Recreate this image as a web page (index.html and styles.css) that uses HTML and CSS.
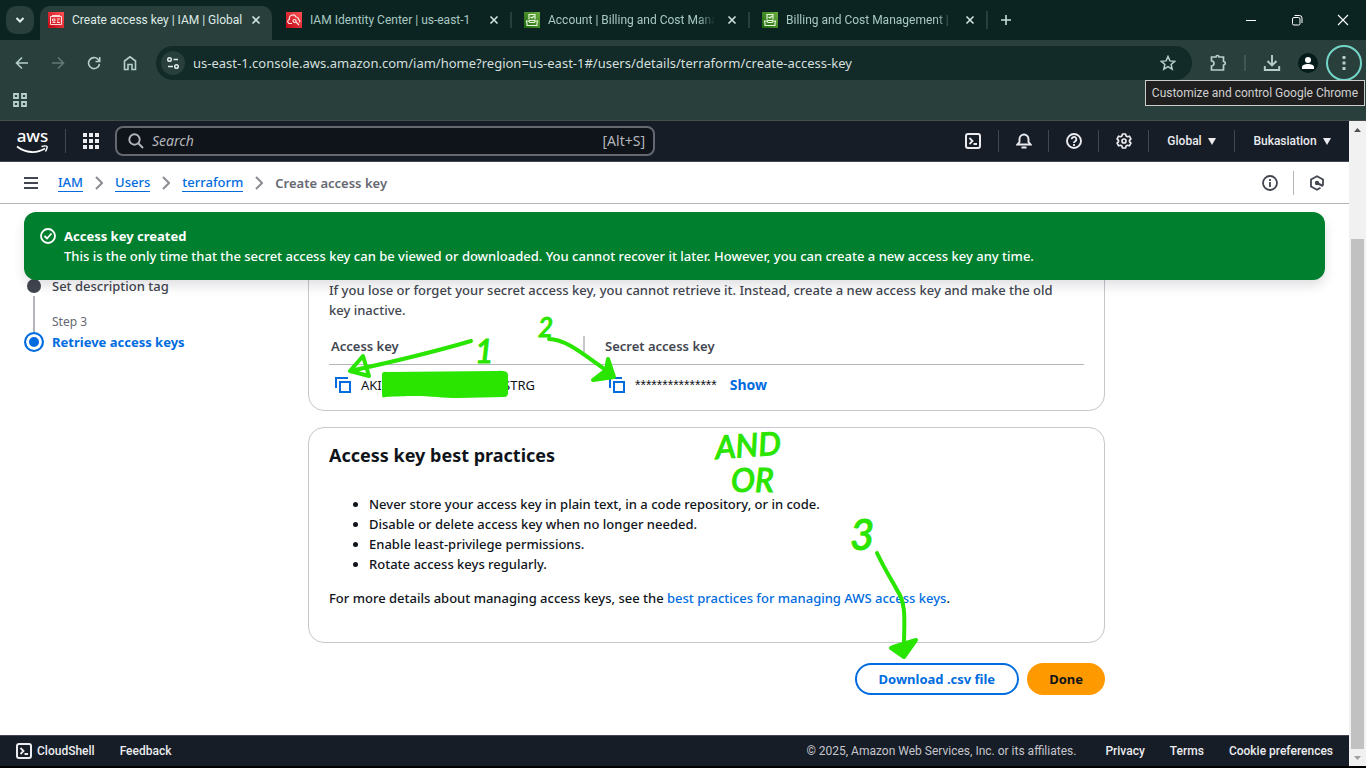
FILE: index.html
```html
<!DOCTYPE html>
<html lang="en">
<head>
<meta charset="utf-8">
<title>Create access key | IAM | Global</title>
<link rel="stylesheet" href="styles.css">
</head>
<body>
<svg class="defs" width="0" height="0" aria-hidden="true">
  <defs>
    <linearGradient id="red" x1="0" y1="1" x2="1" y2="0"><stop offset="0" stop-color="#bd0816"/><stop offset="1" stop-color="#ff5252"/></linearGradient>
    <linearGradient id="green" x1="0" y1="1" x2="1" y2="0"><stop offset="0" stop-color="#1b660f"/><stop offset="1" stop-color="#6cae3e"/></linearGradient>
    <symbol id="close" viewBox="0 0 10 10"><path d="M1.5 1.5l7 7M8.500 1.500l-7 7" fill="none" stroke="currentColor" stroke-width="1.600"/></symbol>
    <symbol id="billing" viewBox="0 0 16 16"><path fill="url(#green)" d="M0 0h16v16H0z"/><path d="M5 7.500V2.500h6v5M6.500 5l1.500 1 2-2M2.500 10.500V9h2l1.500 1.500h4L11.500 9h2v1.500M3 10.500v3h10v-3M5 8.500h6" fill="none" stroke="#e4f5da" stroke-width="1.200"/></symbol>
    <symbol id="copy" viewBox="0 0 18 18"><path d="M2 12V2h12M6 6h10v10H6z" fill="none" stroke="currentColor" stroke-width="2"/></symbol>
    <symbol id="shell" viewBox="0 0 16 16"><rect x="1" y="1" width="14" height="14" rx="2" fill="none" stroke="currentColor" stroke-width="2"/><path d="M4.500 5l3 3-3 3M8.500 11H12" fill="none" stroke="currentColor" stroke-width="1.800"/></symbol>
    <symbol id="chevron" viewBox="0 0 8 14"><path d="M1 1l6 6-6 6" fill="none" stroke="currentColor" stroke-width="2"/></symbol>
  </defs>
</svg>

<header class="browser">
  <div class="tabstrip">
    <button class="tab-search" aria-label="Search tabs"><svg width="10" height="8" viewBox="0 0 10 8"><path d="M1.500 2l3.500 3.500L8.500 2" fill="none" stroke="currentColor" stroke-width="2"/></svg></button>
    <div class="tab active">
      <svg class="favicon" viewBox="0 0 16 16"><path fill="url(#red)" d="M0 0h16v16H0z"/><path d="M2.500 4.500h11v8h-11zM4 3.500h8M4.500 7h2.500v2H4.500zM4.500 10.500h3M9 7h3M9 9h1.500M9 10.500h3" fill="none" stroke="#ffd9d9"/></svg>
      <span class="title">Create access key | IAM | Global</span>
      <button aria-label="Close tab"><svg width="10" height="10"><use href="#close"/></svg></button>
    </div>
    <div class="tab">
      <svg class="favicon" viewBox="0 0 16 16"><path fill="url(#red)" d="M0 0h16v16H0z"/><path d="M6 11.500H4a2 2 0 0 1-.5-4 3.500 3.500 0 0 1 6.500-2.500 2.500 2.500 0 0 1 2.500 2.500 2 2 0 0 1 1 3M8.500 7.500a1.500 1.500 0 1 0 .1 0M10 10l3 3" fill="none" stroke="#ffe0e0" stroke-width="1.200"/></svg>
      <span class="title">IAM Identity Center | us-east-1</span>
      <button aria-label="Close tab"><svg width="10" height="10"><use href="#close"/></svg></button>
    </div>
    <div class="tab ruled">
      <svg class="favicon"><use href="#billing"/></svg>
      <span class="title fade">Account | Billing and Cost Management</span>
      <button aria-label="Close tab"><svg width="10" height="10"><use href="#close"/></svg></button>
    </div>
    <div class="tab ruled">
      <svg class="favicon"><use href="#billing"/></svg>
      <span class="title fade">Billing and Cost Management | Global</span>
      <button aria-label="Close tab"><svg width="10" height="10"><use href="#close"/></svg></button>
    </div>
    <button class="new-tab" aria-label="New tab"><svg width="12" height="12" viewBox="0 0 12 12"><path d="M6 1v10M1 6h10" stroke="currentColor" stroke-width="1.600"/></svg></button>
    <div class="window-controls">
      <button aria-label="Minimize"><svg width="12" height="12" viewBox="0 0 12 12"><path d="M1 6.500h10" stroke="currentColor"/></svg></button>
      <button aria-label="Restore"><svg width="12" height="12" viewBox="0 0 12 12"><rect x="1.500" y="3.500" width="7.500" height="7.500" rx="1.500" fill="none" stroke="currentColor"/><path d="M3.500 1.500h5a2.500 2.500 0 0 1 2.500 2.500v5" fill="none" stroke="currentColor"/></svg></button>
      <button aria-label="Close"><svg width="12" height="12" viewBox="0 0 12 12"><path d="M1 1l10 10M11 1L1 11" stroke="currentColor" stroke-width="1.100"/></svg></button>
    </div>
  </div>
  <div class="toolbar">
    <div class="nav-buttons">
      <button aria-label="Back"><svg width="14" height="14" viewBox="0 0 14 14"><path d="M13 7H2M7 1.500L1.500 7 7 12.500" fill="none" stroke="currentColor" stroke-width="1.600"/></svg></button>
      <button class="dim" aria-label="Forward"><svg width="14" height="14" viewBox="0 0 14 14"><path d="M1 7h11M7 1.500L12.500 7 7 12.500" fill="none" stroke="currentColor" stroke-width="1.600"/></svg></button>
      <button aria-label="Reload"><svg width="14" height="14" viewBox="0 0 14 14"><path d="M12.500 8A5.500 5.500 0 1 1 11 3.200L12.500 5M12.700 1v4.500H8.500" fill="none" stroke="currentColor" stroke-width="1.600"/></svg></button>
      <button aria-label="Home"><svg width="14" height="16" viewBox="0 0 14 16"><path d="M1.500 14.500V6L7 1.800 12.500 6v8.500H9V9.500H5v5z" fill="none" stroke="currentColor" stroke-width="1.600"/></svg></button>
    </div>
    <div class="omnibox">
      <button class="site-info" aria-label="View site information"><svg width="14" height="14" viewBox="0 0 14 14"><path d="M7.500 3.500H12M2 10.500h5" stroke="currentColor" stroke-width="1.600"/><circle cx="3.500" cy="3.500" r="1.800" fill="none" stroke="currentColor" stroke-width="1.500"/><circle cx="10.500" cy="10.500" r="1.800" fill="none" stroke="currentColor" stroke-width="1.500"/></svg></button>
      <input type="text" aria-label="Address" value="us-east-1.console.aws.amazon.com/iam/home?region=us-east-1#/users/details/terraform/create-access-key">
      <button aria-label="Bookmark this tab"><svg width="16" height="16" viewBox="0 0 16 16"><path d="M8 1.500l1.900 4.400 4.800.4-3.600 3.200 1.100 4.700L8 11.700l-4.200 2.500 1.100-4.700L1.300 6.300l4.800-.4z" fill="none" stroke="currentColor" stroke-width="1.500"/></svg></button>
    </div>
    <div class="extensions">
      <button aria-label="Extensions"><svg width="18" height="18" viewBox="0 0 18 18"><path d="M2.500 3H7a1.500 1.500 0 0 1 3 0h4.500v4.500a1.600 1.600 0 0 1 0 3.500v5h-12v-4a2.500 2.500 0 0 0 0-5z" fill="none" stroke="currentColor" stroke-width="1.700"/></svg></button>
      <span class="bar"></span>
      <button aria-label="Downloads"><svg width="18" height="18" viewBox="0 0 18 18"><path d="M9 1v10M4.500 7L9 11.500 13.500 7M1.800 12v4h14.400v-4" fill="none" stroke="currentColor" stroke-width="1.900"/></svg></button>
      <button class="avatar" aria-label="Profile"><svg width="20" height="20" viewBox="0 0 20 20"><circle cx="10" cy="10" r="10" fill="#061c1b"/><circle cx="10" cy="7" r="3" fill="#fff"/><path d="M4 16v-2c0-4 12-4 12 0v2z" fill="#fff"/></svg></button>
      <button class="menu" aria-label="Customize and control Google Chrome"><svg width="4" height="16" viewBox="0 0 4 16"><path d="M.5 1h3v3h-3zM.5 6.500h3v3h-3zM.5 12h3v3h-3z" fill="currentColor"/></svg></button>
      <span class="tooltip" role="tooltip">Customize and control Google Chrome</span>
    </div>
  </div>
  <div class="bookmarks">
    <button aria-label="Apps"><svg width="14" height="14" viewBox="0 0 14 14"><path d="M1 1h4v4H1zM9 1h4v4H9zM1 9h4v4H1zM9 9h4v4H9z" fill="none" stroke="currentColor" stroke-width="1.800"/></svg></button>
  </div>
</header>

<div class="viewport">
  <div class="console">
    <nav class="aws-nav" aria-label="Global">
      <a class="logo" href="#" aria-label="AWS home"><span>aws</span><svg width="33" height="9" viewBox="0 0 33 9"><path d="M1 1.500c9 7 20 7 28 2" fill="none" stroke="#fff" stroke-width="1.800"/><path d="M25.500 1.500c6-1.500 7-.5 4 5" fill="none" stroke="#fff" stroke-width="1.500"/></svg></a>
      <button class="services" aria-label="Services"><svg width="16" height="16" viewBox="0 0 16 16"><path d="M0 0h4v4H0zM6 0h4v4H6zM12 0h4v4h-4zM0 6h4v4H0zM6 6h4v4H6zM12 6h4v4h-4zM0 12h4v4H0zM6 12h4v4H6zM12 12h4v4h-4z" fill="currentColor"/></svg></button>
      <label class="search">
        <svg width="16" height="16" viewBox="0 0 16 16"><circle cx="6.500" cy="6.500" r="5.200" fill="none" stroke="currentColor" stroke-width="1.900"/><path d="M10.500 10.500L15 15" stroke="currentColor" stroke-width="2"/></svg>
        <input type="search" placeholder="Search" aria-label="Search">
        <span>[Alt+S]</span>
      </label>
      <div class="nav-tools">
        <button aria-label="CloudShell"><svg width="16" height="16"><use href="#shell"/></svg></button>
        <button aria-label="Notifications"><svg width="16" height="16" viewBox="0 0 16 16"><path d="M1.500 11.500h13L12.500 9V6a4.500 4.500 0 0 0-9 0v3zM5.500 14.500h5" fill="none" stroke="currentColor" stroke-width="1.900"/></svg></button>
        <button aria-label="Support"><svg width="16" height="16" viewBox="0 0 16 16"><circle cx="8" cy="8" r="7" fill="none" stroke="currentColor" stroke-width="1.900"/><path d="M5.700 6.300a2.300 2.300 0 1 1 3.400 2Q8 8.700 8 10M8 11v2" fill="none" stroke="currentColor" stroke-width="1.800"/></svg></button>
        <button aria-label="Settings"><svg width="16" height="16" viewBox="0 0 16 16"><path d="M6.500 1h3l.6 2 1.300.7 2-.5 1.500 2.600L13.500 7.300v1.400l1.400 1.500-1.500 2.600-2-.5-1.300.7-.6 2h-3l-.6-2-1.300-.7-2 .5-1.500-2.600 1.400-1.500V7.300L1.100 5.800l1.500-2.600 2 .5L5.900 3z" fill="none" stroke="currentColor" stroke-width="1.700" stroke-linejoin="round"/><circle cx="8" cy="8" r="2" fill="none" stroke="currentColor" stroke-width="1.700"/></svg></button>
        <button class="region">Global <svg width="8" height="7" viewBox="0 0 8 7"><path d="M0 0h8L4 7z" fill="currentColor"/></svg></button>
        <button class="account">Bukasiation <svg width="8" height="7" viewBox="0 0 8 7"><path d="M0 0h8L4 7z" fill="currentColor"/></svg></button>
      </div>
    </nav>

    <div class="crumb-bar">
      <button class="burger" aria-label="Open navigation"><svg width="14" height="12" viewBox="0 0 14 12"><path d="M0 1h14M0 6h14M0 11h14" stroke="currentColor" stroke-width="2"/></svg></button>
      <nav class="crumbs" aria-label="Breadcrumbs">
        <a href="#">IAM</a><svg width="8" height="14"><use href="#chevron"/></svg>
        <a href="#">Users</a><svg width="8" height="14"><use href="#chevron"/></svg>
        <a href="#">terraform</a><svg width="8" height="14"><use href="#chevron"/></svg>
        <span>Create access key</span>
      </nav>
      <button class="info" aria-label="Info"><svg width="16" height="16" viewBox="0 0 16 16"><circle cx="8" cy="8" r="7" fill="none" stroke="currentColor" stroke-width="1.800"/><path d="M8 4v2M8 7v5" fill="none" stroke="currentColor" stroke-width="1.800"/></svg></button>
      <button class="hex" aria-label="Tools"><svg width="16" height="16" viewBox="0 0 16 16"><path d="M14 10.500V4.500L8 1.200 2 4.500v7L8 14.800l3.500-2" fill="none" stroke="currentColor" stroke-width="1.800"/><circle cx="8" cy="8" r="2.200" fill="currentColor"/><path d="M8 8l6 3" stroke="currentColor" stroke-width="2"/></svg></button>
    </div>

    <main>
      <div class="flash" role="status">
        <svg width="16" height="16" viewBox="0 0 16 16"><circle cx="8" cy="8" r="7" fill="none" stroke="#fff" stroke-width="1.800"/><path d="M4.500 8l2.500 2.500L11.500 5.500" fill="none" stroke="#fff" stroke-width="1.800"/></svg>
        <div><strong>Access key created</strong><p>This is the only time that the secret access key can be viewed or downloaded. You cannot recover it later. However, you can create a new access key any time.</p></div>
      </div>

      <div class="wizard">
        <ol class="steps">
          <li><span class="dot"></span><span>Set description tag</span></li>
          <li class="current"><span class="line"></span><small>Step 3</small><span class="dot"></span><strong>Retrieve access keys</strong></li>
        </ol>
        <div class="content">
          <section class="card keys">
            <p>If you lose or forget your secret access key, you cannot retrieve it. Instead, create a new access key and make the old key inactive.</p>
            <table>
              <thead><tr><th>Access key</th><th>Secret access key</th></tr></thead>
              <tbody><tr>
                <td><div class="cell"><button aria-label="Copy access key"><svg width="18" height="18"><use href="#copy"/></svg></button><span class="key"><span>AKI</span><span>STRG</span></span></div></td>
                <td><div class="cell"><button aria-label="Copy secret access key"><svg width="18" height="18"><use href="#copy"/></svg></button><span class="mask">***************</span><a class="show" href="#">Show</a></div></td>
              </tr></tbody>
            </table>
          </section>
          <section class="card practices">
            <h2>Access key best practices</h2>
            <ul>
              <li>Never store your access key in plain text, in a code repository, or in code.</li>
              <li>Disable or delete access key when no longer needed.</li>
              <li>Enable least-privilege permissions.</li>
              <li>Rotate access keys regularly.</li>
            </ul>
            <p>For more details about managing access keys, see the <a href="#">best practices for managing AWS access keys</a>.</p>
          </section>
          <div class="actions">
            <button class="secondary">Download .csv file</button>
            <button class="primary">Done</button>
          </div>
        </div>
      </div>

      <svg class="ink" width="1105" height="531" viewBox="0 204 1105 531">
        <g fill="none" stroke="#29e500" stroke-width="4" stroke-linecap="round" stroke-linejoin="round">
          <path d="M471 341Q420 356 350 371L363 356L369 376L350 371"/>
          <path d="M549 339C566 339 584 355 610 373"/>
          <path d="M608 359L614 377L593 380L606 370z" fill="#29e500"/>
          <path d="M877 553C884 568 891 579 897 590C907 604 904 624 904 645"/>
          <path d="M891 648L904 657L916 640L893 647z" fill="#29e500"/>
        </g>
        <path d="M382 375q0-4 5-3l110-1q11-1 11 4v18q0 4-4 4l-45 1c-25 0-30-4-74-1q-3 2-3-3z" fill="#29e500"/>
        <g class="ink-text">
          <text x="475" y="363" class="medium">1</text>
          <text x="538" y="337">2</text>
          <text x="850" y="550" class="large">3</text>
          <text x="716" y="459" class="medium" transform="rotate(-4 716 459)">AND</text>
          <text x="731" y="492" class="medium">OR</text>
        </g>
      </svg>
    </main>

    <footer>
      <button><svg width="16" height="16"><use href="#shell"/></svg>CloudShell</button>
      <a href="#">Feedback</a>
      <span class="legal">© 2025, Amazon Web Services, Inc. or its affiliates.</span>
      <a href="#">Privacy</a>
      <a href="#">Terms</a>
      <a href="#">Cookie preferences</a>
    </footer>
  </div>
  <div class="scrollbar" aria-hidden="true">
    <svg width="17" height="17" viewBox="0 0 17 17"><path d="M5 11l3.500-4L12 11z" fill="#505050"/></svg>
    <div class="track"><div class="thumb"></div></div>
    <svg width="17" height="17" viewBox="0 0 17 17"><path d="M5 7l3.500 4L12 7z" fill="#a0a0a0"/></svg>
  </div>
</div>
</body>
</html>
```
FILE: styles.css
```css
* { box-sizing: border-box; }
body {
  margin: 0;
  height: 100vh;
  display: flex;
  flex-direction: column;
  padding-bottom: 2px;
  background: #000;
  overflow: hidden;
  font-family: "Noto Sans", sans-serif;
  font-size: 13px;
  font-weight: 500;
  line-height: 20px;
  color: #0f141a;
}
button { border: 0; padding: 0; background: none; color: inherit; font: inherit; display: inline-flex; align-items: center; justify-content: center; }
svg { display: block; flex: none; }
.defs { position: absolute; }
p, ul, ol, h2 { margin: 0; }
a { color: #006ce0; text-decoration: none; }

.browser { background: #283f3b; border-bottom: 1px solid #444d4b; font-family: Roboto, sans-serif; font-weight: 400; color: #b6cfca; }
.tabstrip { display: flex; height: 40px; padding-left: 6px; background: #0b2421; align-items: center; }
.tab-search { width: 28px; height: 28px; border-radius: 10px; background: #283f3b; color: #e0efec; margin-right: 6px; }
.tab { display: flex; align-items: center; width: 238px; height: 34px; align-self: flex-end; padding: 0 7px 6px 14px; font-size: 12px; color: #a9c9c3; }
.tab.active { width: 232px; padding-left: 8px; border-radius: 10px 10px 0 0; background: #283f3b; color: #dfebe8; }
.tab.ruled { border-left: 2px solid #283f3b; border-image: linear-gradient(transparent 20%, #283f3b 20%, #283f3b 65%, transparent 65%) 1; padding-left: 12px; }
.favicon { width: 16px; height: 16px; margin-right: 8px; }
.title { flex: 1; overflow: hidden; white-space: nowrap; }
.title.fade { margin-right: 8px; mask-image: linear-gradient(90deg, #000 90%, transparent); }
.tab button { width: 18px; color: #d0e4df; }
.new-tab { width: 38px; height: 18px; border-left: 2px solid #283f3b; color: #c7dfd9; }
.window-controls { display: flex; margin-left: auto; color: #fff; }
.window-controls button { width: 46px; height: 40px; }

.toolbar { display: flex; align-items: center; height: 46px; gap: 8px; padding-right: 4px; }
.nav-buttons { display: flex; padding-left: 4px; }
.nav-buttons button { width: 36px; height: 36px; }
.dim { opacity: .4; }
.omnibox { flex: 1; display: flex; align-items: center; height: 34px; border-radius: 17px; background: #122b28; padding: 0 16px 0 5px; }
.site-info { width: 24px; height: 24px; border-radius: 12px; background: #283f3b; color: #dfebe8; }
.omnibox input { flex: 1; min-width: 0; border: 0; outline: 0; padding: 0 8px; background: none; font: 13px/20px "Noto Sans", sans-serif; color: #d5dfdd; }
.extensions { position: relative; display: flex; align-items: center; gap: 8px; }
.extensions button { width: 36px; height: 36px; }
.extensions .avatar { width: 20px; }
.extensions .menu { border: 2px solid #74d6c8; border-radius: 18px; }
.bar { width: 2px; height: 16px; background: #3f5753; }
.tooltip { position: absolute; right: -3px; top: 35px; z-index: 3; padding: 1px 6px; border: 1px solid #ccc; background: #1f1f1f; color: #d0d0d0; font-size: 12px; line-height: 22px; white-space: nowrap; }
.bookmarks { height: 34px; padding: 4px 13px; }
.bookmarks button { height: 20px; }

.viewport { flex: 1; min-height: 0; display: flex; }
.console { flex: 1; min-width: 0; display: flex; flex-direction: column; background: #fff; }
.aws-nav { display: flex; align-items: center; height: 41px; padding-left: 16px; background: #161d26; border-bottom: 1px solid #424650; color: #ebebf0; }
.logo { display: flex; flex-direction: column; align-items: center; color: #fff; font-size: 17px; line-height: 13px; }
.logo span { height: 16px; }
.services { width: 50px; height: 24px; margin-left: 16px; border-left: 1px solid #424650; }
.search { display: flex; align-items: center; gap: 8px; width: 540px; height: 30px; border: 2px solid #656871; border-radius: 8px; background: #0f141a; padding: 0 8px 0 11px; color: #b4b4bb; font-size: 14px; font-weight: 400; }
.search input { flex: 1; min-width: 0; border: 0; outline: 0; padding: 0; background: none; font: 14px/20px "Noto Sans", sans-serif; color: #fff; }
.search input::placeholder { color: #b4b4bb; font-style: italic; }
.nav-tools { display: flex; margin-left: auto; }
.nav-tools button { width: 50px; height: 22px; border-left: 1px solid #424650; }
.nav-tools button:first-child { border: 0; }
.nav-tools .region, .nav-tools .account { font: 500 12px/20px Roboto, sans-serif; gap: 6px; }
.nav-tools .region { width: 86px; }
.nav-tools .account { width: 115px; }

.crumb-bar { display: flex; align-items: center; height: 42px; padding: 0 24px; border-bottom: 1px solid #b4b4bb; color: #424650; }
.crumbs { display: flex; align-items: center; gap: 12px; margin-left: 20px; color: #8c8c94; }
.crumbs a { border-bottom: 1px solid #006ce0; line-height: 18px; }
.crumbs span { color: #656871; font-weight: 600; }
.info { margin-left: auto; width: 46px; height: 24px; }
.hex { width: 32px; height: 24px; padding-left: 14px; border-left: 1px solid #b4b4bb; }
.burger { width: 14px; height: 20px; }

main { position: relative; flex: 1; min-height: 0; overflow: hidden; padding: 60px 24px 0; }
.flash { position: absolute; z-index: 1; top: 8px; left: 24px; right: 24px; display: flex; gap: 8px; padding: 14px 16px; min-height: 68px; border-radius: 12px; background: #00802f; color: #fff; box-shadow: 0 6px 12px rgba(0, 7, 22, .12); }
.flash svg { margin-top: 2px; }
.wizard { display: grid; grid-template-columns: 260px minmax(0, 1fr); gap: 24px; max-width: 1081px; }
.steps { list-style: none; padding: 12px 0 0; color: #424650; }
.steps li { display: grid; grid-template-columns: 20px 1fr; column-gap: 8px; align-items: center; }
.steps .dot { width: 14px; height: 14px; border-radius: 7px; background: #424650; justify-self: center; }
.steps .line { width: 2px; height: 36px; background: #b4b4bb; justify-self: center; }
.steps small { align-self: end; font-size: 12px; font-weight: 400; color: #656871; line-height: 20px; }
.steps .current .dot { width: 20px; height: 20px; border-radius: 10px; border: 2px solid #006ce0; background: #006ce0; box-shadow: inset 0 0 0 3px #fff; }
.steps strong { color: #006ce0; }

.card { border: 1px solid #c6c6cd; border-radius: 16px; padding: 0 20px; }
.keys { padding-top: 15px; padding-bottom: 5px; }
.keys p { color: #424650; padding-right: 16px; }
table { width: 100%; margin-top: 16px; border-collapse: collapse; table-layout: fixed; }
th { position: relative; height: 28px; padding: 0 2px 8px; border-bottom: 1px solid #b4b4bb; color: #424650; text-align: left; font-weight: 600; }
th:first-child { width: 254px; }
th + th { padding-left: 22px; }
th + th::before { content: ""; position: absolute; left: 0; top: 0; width: 2px; height: 18px; background: #c6c6cd; }
td { height: 40px; padding: 0 5px; }
td + td { padding-left: 25px; }
.cell { display: flex; align-items: center; gap: 9px; }
.cell button { color: #006ce0; }
.key { display: flex; justify-content: space-between; width: 174px; font-weight: 400; }
.mask { font: 14px/20px "Liberation Sans", sans-serif; }
.show { font-weight: 700; font-size: 14px; margin-left: 4px; }
.practices { margin-top: 16px; padding-top: 12px; padding-bottom: 34px; }
h2 { font-size: 18px; line-height: 30px; font-weight: 700; }
.practices ul { padding: 24px 0 14px 40px; }
.actions { display: flex; justify-content: flex-end; gap: 8px; margin-top: 20px; }
.actions button { height: 32px; padding: 0 20px; border: 2px solid #006ce0; border-radius: 16px; font-weight: 700; color: #006ce0; }
.actions .secondary { padding: 0 22px; }
.actions .primary { border-color: #ff9900; background: #ff9900; color: #0f141a; }
.ink { position: absolute; z-index: 2; left: 0; top: 0; pointer-events: none; }
.ink-text { fill: #29e500; stroke: #29e500; stroke-width: 1; font: italic 500 26px Lato, sans-serif; }
.ink-text .medium { font-size: 32px; }
.ink-text .large { font-size: 42px; }

footer { display: flex; align-items: center; gap: 25px; height: 31px; padding: 0 16px; border-top: 1px solid #424650; background: #161d26; color: #ebebf0; font: 500 12px/20px Roboto, sans-serif; }
footer button { gap: 5px; }
footer a { color: #ebebf0; }
.legal { margin-left: auto; color: #c6c6cd; font-weight: 400; margin-right: 4px; }

.scrollbar { width: 17px; display: flex; flex-direction: column; background: #f1f1f1; }
.track { flex: 1; display: flex; flex-direction: column; justify-content: flex-end; }
.thumb { height: 83.5%; margin: 0 2px; background: #c1c1c1; }
```
